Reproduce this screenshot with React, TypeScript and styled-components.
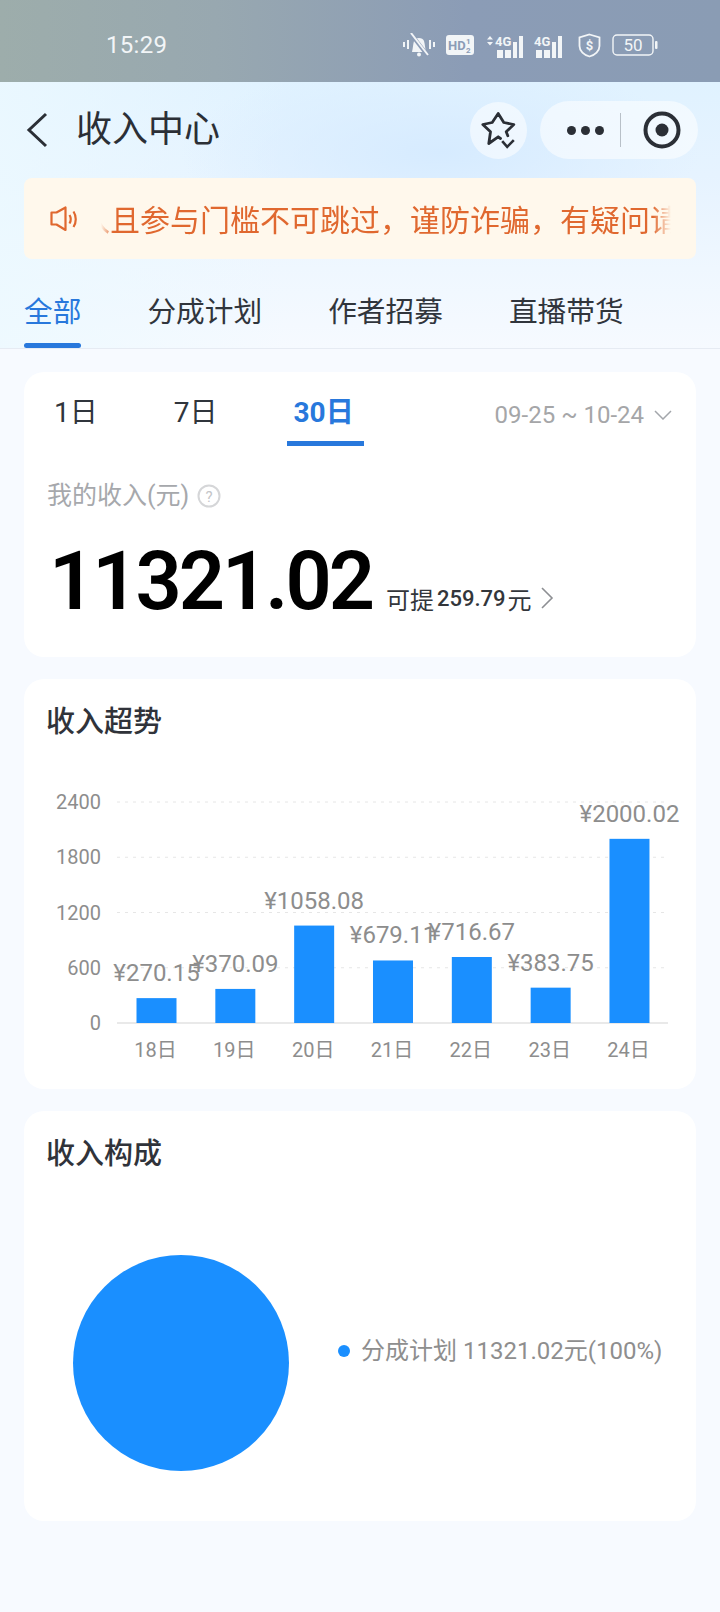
import styled, { createGlobalStyle } from 'styled-components'

const GlobalStyle = createGlobalStyle`
    html, body {
        margin: 0;
        padding: 0;
        background: #f7faff;
    }
    * {
        box-sizing: border-box;
    }
`;

const Page = styled.div`
    width: 720px;
    height: 1612px;
    overflow: hidden;
    background: #f7faff;
    font-family: Roboto, "Noto Sans CJK SC", sans-serif;
`;

const StatusBar = styled.div`
    height: 82px;
    display: flex;
    align-items: center;
    justify-content: space-between;
    padding: 8px 62px 0 106px;
    color: #f2f5f7;
    background: linear-gradient(90deg, #9dadab 0%, #98a8b0 30%, #8b9cb6 65%, #8a9cb4 100%);
`;

const Clock = styled.span`
    font-size: 24px;
    letter-spacing: 0.3px;
`;

const StatusIcons = styled.div`
    display: flex;
    align-items: center;
    gap: 11px;
`;

const Head = styled.div`
    background:
        radial-gradient(ellipse 260px 90px at 440px 70px, #d6ebff 0%, rgba(214, 235, 255, 0) 100%),
        linear-gradient(90deg, rgba(236, 249, 255, 0.8) 0%, rgba(236, 249, 255, 0) 40%),
        linear-gradient(180deg, #e0f2ff 0%, #e6f3ff 35%, #eff7ff 70%, #f6faff 100%);
`;

const NavBar = styled.div`
    height: 96px;
    display: flex;
    align-items: center;
    padding: 0 22px 0 25px;
    color: #2b2f36;
`;

const NavTitle = styled.h1`
    margin: 0 0 0 27px;
    flex: 1;
    font-size: 36px;
    font-weight: 400;
    line-height: 1;
`;

const RoundButton = styled.div`
    width: 57px;
    height: 57px;
    margin-right: 13px;
    border-radius: 50%;
    background: rgba(255, 255, 255, 0.55);
    display: flex;
    align-items: center;
    justify-content: center;
`;

const Capsule = styled.div`
    width: 158px;
    height: 58px;
    border-radius: 29px;
    background: rgba(255, 255, 255, 0.55);
    display: flex;
    align-items: center;
    padding-left: 27px;
`;

const Dots = styled.div`
    display: flex;
    gap: 5px;
`;

const Dot = styled.span`
    width: 9px;
    height: 9px;
    border-radius: 50%;
    background: #2b2f36;
`;

const CapsuleLine = styled.span`
    width: 1px;
    height: 34px;
    margin: 0 22px 0 16px;
    background: #b8c0c8;
`;

const Notice = styled.div`
    height: 81px;
    margin: 0 24px;
    border-radius: 8px;
    background: #fff8ec;
    display: flex;
    align-items: center;
    padding-left: 26px;
    color: #e0682f;
`;

const NoticeWindow = styled.div`
    width: 570px;
    margin-left: 23px;
    padding-top: 5px;
    overflow: hidden;
    white-space: nowrap;
    font-size: 30px;
    line-height: 40px;
    -webkit-mask-image: linear-gradient(90deg, transparent 0, #000 12px, #000 552px, transparent 570px);
    mask-image: linear-gradient(90deg, transparent 0, #000 12px, #000 552px, transparent 570px);
`;

const NoticeText = styled.div`
    margin-left: -21px;
`;

const Tabs = styled.div`
    height: 90px;
    display: flex;
    padding-left: 24px;
    gap: 66px;
    border-bottom: 1px solid #e6ebf3;
`;

const Tab = styled.div<{ $active?: boolean }>`
    position: relative;
    font-size: 28.7px;
    line-height: 106px;
    height: 89px;
    color: ${p => (p.$active ? '#2878dc' : '#30353c')};

    &::after {
        content: '';
        display: ${p => (p.$active ? 'block' : 'none')};
        position: absolute;
        left: 0;
        right: 0;
        bottom: 0;
        height: 5px;
        border-radius: 3px;
        background: #2878dc;
    }
`;

const Content = styled.div`
    padding: 23px 24px 0;
    display: flex;
    flex-direction: column;
    gap: 22px;
`;

const Card = styled.section<{ $height: number }>`
    height: ${p => p.$height}px;
    border-radius: 20px;
    background: #fff;
`;

const PeriodRow = styled.div`
    height: 70px;
    display: flex;
    align-items: center;
    padding: 0 24px 0 30px;
    gap: 76px;
`;

const Period = styled.div<{ $active?: boolean }>`
    position: relative;
    height: 70px;
    font-size: 28px;
    line-height: 82px;
    font-weight: ${p => (p.$active ? 700 : 400)};
    color: ${p => (p.$active ? '#2878dc' : '#30353c')};

    &::after {
        content: '';
        display: ${p => (p.$active ? 'block' : 'none')};
        position: absolute;
        left: -7px;
        right: -10px;
        bottom: -4px;
        height: 5px;
        background: #2878dc;
    }
`;

const DateRange = styled.div`
    margin-left: auto;
    display: flex;
    align-items: center;
    gap: 10px;
    padding-top: 15px;
    font-size: 24px;
    color: #a5a6a8;
`;

const IncomeLabel = styled.div`
    display: flex;
    align-items: center;
    gap: 8px;
    margin: 39px 0 0 23px;
    font-size: 25px;
    line-height: 30px;
    color: #a6a8ac;
`;

const IncomeRow = styled.div`
    display: flex;
    align-items: flex-end;
    margin: 24px 0 0 25px;
    color: #33363b;
`;

const IncomeValue = styled.div`
    font-size: 81px;
    line-height: 94px;
    font-weight: 600;
    letter-spacing: -3px;
    color: #000;
`;

const Withdraw = styled.div`
    display: flex;
    align-items: center;
    height: 30px;
    margin: 0 0 16px 14px;
    font-size: 24px;
`;

const WithdrawNum = styled.span`
    margin: 0 2px 0 3px;
    font-weight: 500;
    font-size: 22px;
`;

const Arrow = styled.span`
    display: flex;
    margin-left: 8px;
`;

const CardTitle = styled.h2`
    margin: 0;
    padding: 25px 0 0 22px;
    font-size: 29px;
    line-height: 36px;
    font-weight: 500;
    color: #30333a;
`;

const Chart = styled.svg`
    display: block;
    margin-top: 30px;
`;

const PieRow = styled.div`
    display: flex;
    align-items: flex-start;
    margin-top: 83px;
    padding-left: 49px;
`;

const Legend = styled.div`
    display: flex;
    align-items: center;
    margin: 81px 0 0 49px;
    font-size: 24px;
    line-height: 30px;
    white-space: nowrap;
    color: #8e8e8e;
`;

const LegendDot = styled.span`
    width: 12px;
    height: 12px;
    margin-right: 11px;
    border-radius: 50%;
    background: #1a8fff;
`;

const BLUE = '#1a8fff';
const AXIS = '#8d8d8d';
const BASE_Y = 1023;
const PLOT_H = 221;

const bars = [
    { day: '18日', value: 270.15 },
    { day: '19日', value: 370.09 },
    { day: '20日', value: 1058.08 },
    { day: '21日', value: 679.11 },
    { day: '22日', value: 716.67 },
    { day: '23日', value: 383.75 },
    { day: '24日', value: 2000.02 },
];

const ticks = [2400, 1800, 1200, 600, 0];

function TrendChart() {
    return (
        <Chart width={672} height={300} viewBox="24 770 672 300" fontFamily='Roboto, "Noto Sans CJK SC", sans-serif'>
            {ticks.map(t => {
                const y = BASE_Y - (t / 2400) * PLOT_H
                return (
                    <g key={t}>
                        <line
                            x1={117}
                            x2={668}
                            y1={y}
                            y2={y}
                            stroke={t === 0 ? '#e9e9e9' : '#e6e6e6'}
                            strokeWidth={t === 0 ? 2 : 1}
                            strokeDasharray={t === 0 ? undefined : '3 5'}
                        />
                        <text x={101} y={y + 7} textAnchor="end" fontSize={20} fill={AXIS}>{t}</text>
                    </g>
                )
            })}
            {bars.map((b, i) => {
                const cx = 156.5 + i * 78.83
                const h = (b.value / 2400) * PLOT_H
                return (
                    <g key={b.day}>
                        <rect x={cx - 20} y={BASE_Y - h} width={40} height={h} fill={BLUE} />
                        <text x={cx} y={BASE_Y - h - 17} textAnchor="middle" fontSize={24} fill={AXIS}>¥{b.value.toFixed(2)}</text>
                        <text x={cx - 1} y={1057} textAnchor="middle" fontSize={20} fill={AXIS}>{b.day}</text>
                    </g>
                )
            })}
        </Chart>
    )
}

function SignalIcon({ updown }: { updown?: boolean }) {
    const off = updown ? 10 : 0
    const width = updown ? 38 : 33
    return (
        <svg width={width} height={26} viewBox={`0 -2 ${width} 26`} fill="#f2f5f7">
            {updown && <path d="M2 5.5 L5 2 L8 5.5 Z M2 8 L8 8 L5 11.5 Z" />}
            <text x={off} y={12} fontSize={13} fontWeight={700} fontFamily="Roboto, sans-serif">4G</text>
            <rect x={off + 2} y={16} width={6} height={8} />
            <rect x={off + 10} y={16} width={6} height={8} />
            <rect x={off + 18} y={8} width={4} height={16} />
            <rect x={off + 24} y={2} width={4} height={22} />
        </svg>
    )
}

export default function App() {
    return (
        <Page>
            <GlobalStyle />
            <StatusBar>
                <Clock>15:29</Clock>
                <StatusIcons>
                    <svg width={32} height={24} viewBox="0 0 32 24">
                        <rect x={0} y={9} width={2} height={5} fill="#f2f5f7" />
                        <rect x={4} y={7} width={2} height={9} fill="#f2f5f7" />
                        <rect x={26} y={7} width={2} height={9} fill="#f2f5f7" />
                        <rect x={30} y={9} width={2} height={5} fill="#f2f5f7" />
                        <path d="M9 19 C10 15 10 11 11 8 C12 4 20 4 21 8 C22 11 22 15 23 19 Z" fill="#f2f5f7" />
                        <circle cx={16} cy={21.5} r={2} fill="#f2f5f7" />
                        <path d="M8 1 L25 23" stroke="#8b9cb6" strokeWidth={4} />
                        <path d="M8 0 L25 22" stroke="#f2f5f7" strokeWidth={2} />
                    </svg>
                    <svg width={28} height={20} viewBox="0 0 28 20">
                        <rect width={28} height={20} rx={3} fill="#f2f5f7" />
                        <text x={2} y={15} fontSize={13} fontWeight={700} fontFamily="Roboto, sans-serif" fill="#8b9cb6">HD</text>
                        <text x={20} y={9} fontSize={8} fontWeight={700} fontFamily="Roboto, sans-serif" fill="#8b9cb6">1</text>
                        <text x={20} y={18} fontSize={8} fontWeight={700} fontFamily="Roboto, sans-serif" fill="#8b9cb6">2</text>
                    </svg>
                    <SignalIcon updown />
                    <SignalIcon />
                    <svg width={23} height={25} viewBox="0 0 23 25" fill="none">
                        <path d="M11.5 1.5 L21.5 4.5 V13 C21.5 18 17 22 11.5 23.5 C6 22 1.5 18 1.5 13 V4.5 Z" stroke="#f2f5f7" strokeWidth={1.8} />
                        <text x={11.5} y={17} textAnchor="middle" fontSize={13} fontWeight={700} fontFamily="Roboto, sans-serif" fill="#f2f5f7">$</text>
                    </svg>
                    <svg width={46} height={22} viewBox="0 0 46 22" fill="none">
                        <rect x={1} y={1} width={40} height={20} rx={4} stroke="#f2f5f7" strokeWidth={1.4} />
                        <rect x={43} y={7} width={2.5} height={8} rx={1} fill="#f2f5f7" />
                        <text x={21} y={17} textAnchor="middle" fontSize={17} fontFamily="Roboto, sans-serif" fill="#f2f5f7">50</text>
                    </svg>
                </StatusIcons>
            </StatusBar>

            <Head>
                <NavBar>
                    <svg width={24} height={36} viewBox="0 0 24 36" fill="none">
                        <path d="M21 2 L4 18 L21 34" stroke="#2b2f36" strokeWidth={3} />
                    </svg>
                    <NavTitle>收入中心</NavTitle>
                    <RoundButton>
                        <svg width={40} height={40} viewBox="0 0 40 40" fill="none">
                            <path d="M28.8 25.8 L27.2 21.8 L34.8 14.5 L24.8 12.5 L19.2 3.5 L13.2 12.5 L3.8 14.5 L11.5 21.8 L9.8 33.5 L19.2 26.8 L21.5 28.5" stroke="#2b2f36" strokeWidth={2.8} strokeLinejoin="round" strokeLinecap="round" />
                            <path d="M23.2 31.2 L28.2 36.8 L34.8 30.2" stroke="#2b2f36" strokeWidth={2.6} />
                        </svg>
                    </RoundButton>
                    <Capsule>
                        <Dots><Dot /><Dot /><Dot /></Dots>
                        <CapsuleLine />
                        <svg width={38} height={38} viewBox="0 0 38 38" fill="none">
                            <circle cx={19} cy={19} r={16.5} stroke="#2b2f36" strokeWidth={4} />
                            <circle cx={19} cy={19} r={6.5} fill="#2b2f36" />
                        </svg>
                    </Capsule>
                </NavBar>

                <Notice>
                    <svg width={28} height={26} viewBox="0 0 28 26" fill="none" stroke="#e0682f" strokeWidth={2.2}>
                        <path d="M1.5 6.5 H6.5 L15.5 1.5 V24 L6.5 18.5 H1.5 Z" strokeLinejoin="round" />
                        <path d="M19.5 9 C21 11.5 21 15 19.5 17.5" />
                        <path d="M23.5 5.5 C26.5 10 26.5 16.5 23.5 21" />
                    </svg>
                    <NoticeWindow>
                        <NoticeText>入且参与门槛不可跳过，谨防诈骗，有疑问请联系客服</NoticeText>
                    </NoticeWindow>
                </Notice>

                <Tabs>
                    <Tab $active>全部</Tab>
                    <Tab>分成计划</Tab>
                    <Tab>作者招募</Tab>
                    <Tab>直播带货</Tab>
                </Tabs>
            </Head>

            <Content>
                <Card $height={285}>
                    <PeriodRow>
                        <Period>1日</Period>
                        <Period>7日</Period>
                        <Period $active>30日</Period>
                        <DateRange>
                            09-25 ~ 10-24
                            <svg width={18} height={10} viewBox="0 0 18 10" fill="none">
                                <path d="M1 1 L9 9 L17 1" stroke="#a3a6ab" strokeWidth={1.5} />
                            </svg>
                        </DateRange>
                    </PeriodRow>
                    <IncomeLabel>
                        我的收入(元)
                        <svg width={24} height={24} viewBox="0 0 24 24" fill="none">
                            <circle cx={12} cy={12} r={10.5} stroke="#d5d6d8" strokeWidth={2} />
                            <text x={12} y={17.5} textAnchor="middle" fontSize={15} fill="#c4c5c8" fontFamily="Roboto, sans-serif">?</text>
                        </svg>
                    </IncomeLabel>
                    <IncomeRow>
                        <IncomeValue>11321.02</IncomeValue>
                        <Withdraw>
                            可提
                            <WithdrawNum>259.79</WithdrawNum>
                            元
                            <Arrow>
                                <svg width={14} height={22} viewBox="0 0 14 22" fill="none">
                                    <path d="M2 1 L12 11 L2 21" stroke="#8d8f93" strokeWidth={1.6} />
                                </svg>
                            </Arrow>
                        </Withdraw>
                    </IncomeRow>
                </Card>

                <Card $height={410}>
                    <CardTitle>收入超势</CardTitle>
                    <TrendChart />
                </Card>

                <Card $height={410}>
                    <CardTitle>收入构成</CardTitle>
                    <PieRow>
                        <svg width={216} height={216} viewBox="0 0 216 216">
                            <circle cx={108} cy={108} r={108} fill={BLUE} />
                        </svg>
                        <Legend>
                            <LegendDot />
                            分成计划 11321.02元(100%)
                        </Legend>
                    </PieRow>
                </Card>
            </Content>
        </Page>
    )
}
